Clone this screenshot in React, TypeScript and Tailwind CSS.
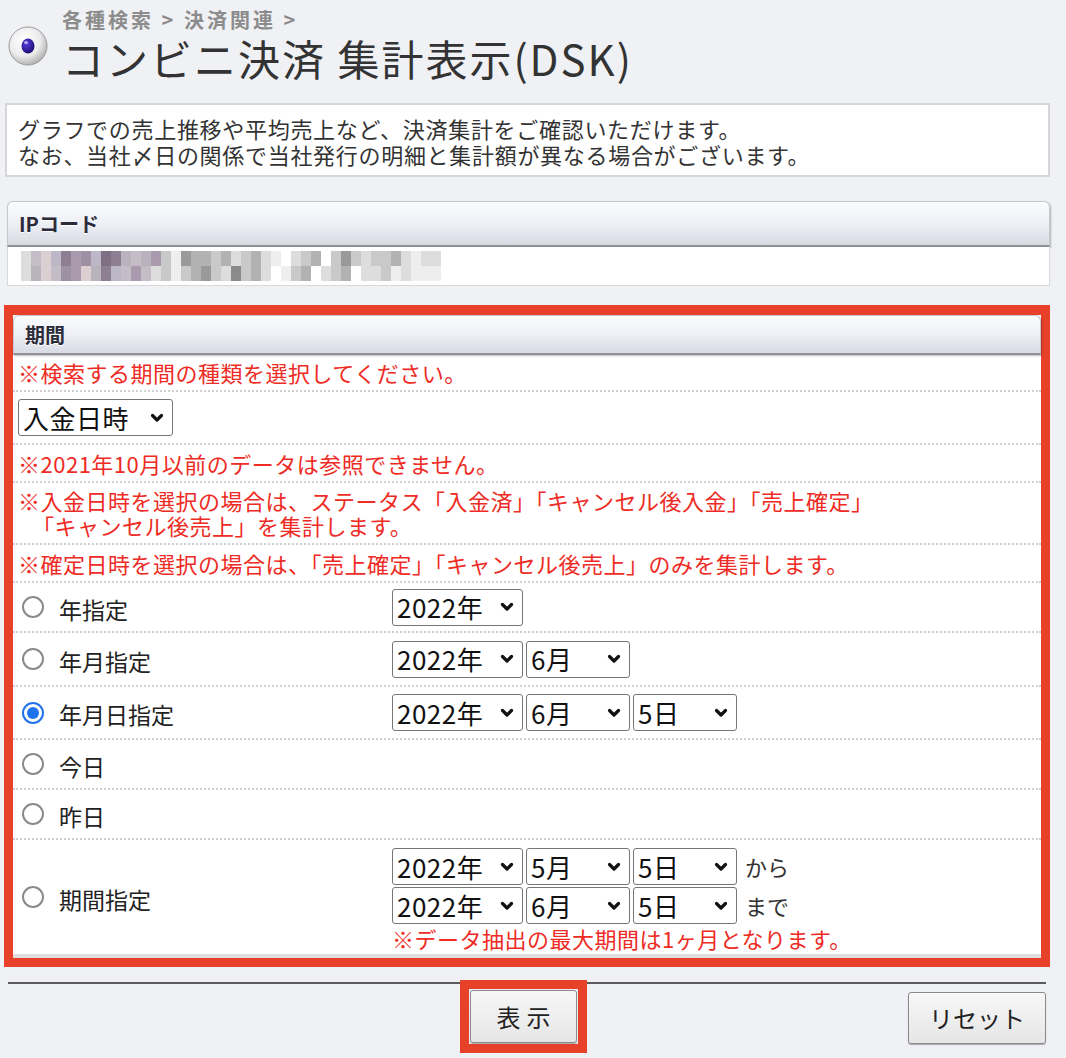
import React from "react";

const JP = "font-['Noto_Sans_CJK_JP','Noto_Sans',sans-serif]";

function Chevron() {
  return (
    <svg width="14" height="10" viewBox="0 0 14 10" className="shrink-0">
      <path d="M2.5 2.5 L7 7 L11.5 2.5" fill="none" stroke="#111" strokeWidth="3.2" strokeLinecap="round" strokeLinejoin="round" />
    </svg>
  );
}

function Select({ value, w }: { value: string; w: string }) {
  return (
    <div className={`${w} h-[37px] flex items-center justify-between pl-[4px] pr-[8px] bg-white border border-[#767676] rounded-[3px] text-[26px] leading-none text-[#111] tracking-[0.5px]`}>
      <span>{value}</span>
      <Chevron />
    </div>
  );
}

function Radio({ checked }: { checked?: boolean }) {
  if (checked) {
    return (
      <span className="w-[22px] h-[22px] shrink-0 rounded-full border-2 border-[#1f73ec] bg-white flex items-center justify-center">
        <span className="w-[12px] h-[12px] rounded-full bg-[#1f73ec]" />
      </span>
    );
  }
  return <span className="w-[22px] h-[22px] shrink-0 rounded-full border-2 border-[#8a8a8a] bg-white" />;
}

function BarHeader({ label, h }: { label: string; h: string }) {
  return (
    <div className={`${h} flex items-center px-[11px] bg-linear-to-b from-[#fbfcff] via-[#eef0f6] to-[#d8dbe3] border border-[#c6c8ce] border-b-2 border-b-[#8f9198] rounded-t-[6px] shadow-[1px_1px_2px_rgba(0,0,0,0.25)]`}>
      <span className="text-[20px] leading-none font-bold text-[#2b2b3a] [text-shadow:0_1px_0_#fff]">{label}</span>
    </div>
  );
}

function Note({ children, h }: { children: React.ReactNode; h: string }) {
  return (
    <div className={`${h} flex flex-col justify-center pl-[5px] border-b-2 border-dotted border-[#d0d0d0] text-[22px] leading-[25px] tracking-[0.5px] text-[#ee2b24]`}>
      {children}
    </div>
  );
}

function RadioRow({ label, checked, h, children }: { label: string; checked?: boolean; h: string; children?: React.ReactNode }) {
  return (
    <div className={`${h} flex items-center border-b-2 border-dotted border-[#d0d0d0]`}>
      <div className="w-[379px] flex items-center pl-[9px] gap-[15px]">
        <Radio checked={checked} />
        <span className="text-[23px] leading-none text-[#222] mt-[4px]">{label}</span>
      </div>
      <div className="flex gap-[3px]">{children}</div>
    </div>
  );
}

const palette: Record<string, string> = {
  a: "#9d91a3", b: "#dccfd2", c: "#bdb8c8", d: "#8d7f91", e: "#a99aae", f: "#c4bcc7",
  g: "#7e6f83", h: "#b9b3bd", i: "#9a9a9a", j: "#b2b2b2", k: "#c9c9c9", l: "#dddddd",
  m: "#eeeeee", n: "#ffffff", o: "#8a8a8a",
};
const mosaic = [
  "lfbcdeacgdhfhekm" + "ijjkjlkjl" + "mnlkjnkiklkkjlmll",
  "lhbfaebhdcfeflkm" + "kjiklokjl" + "nmkjnlkjnllkmlmmm",
];

export default function App() {
  return (
    <div className={`min-h-[1058px] w-[1066px] bg-[#f0f1f5] ${JP} text-[#222]`}>
      <div className="w-[1045px] ml-[5px] pt-[8px]">
        {/* header */}
        <div className="flex">
          <svg width="40" height="40" viewBox="0 0 40 40" className="mt-[18px] ml-[3px] shrink-0">
            <defs>
              <radialGradient id="sph" cx="0.4" cy="0.35" r="0.7">
                <stop offset="0" stopColor="#ffffff" />
                <stop offset="0.6" stopColor="#ececec" />
                <stop offset="1" stopColor="#a9a9a9" />
              </radialGradient>
              <radialGradient id="dot" cx="0.4" cy="0.35" r="0.7">
                <stop offset="0" stopColor="#5a3ee0" />
                <stop offset="1" stopColor="#1a0a6a" />
              </radialGradient>
            </defs>
            <circle cx="20" cy="20" r="19" fill="url(#sph)" stroke="#9a9a9a" strokeWidth="1" />
            <ellipse cx="20" cy="20" rx="6.5" ry="7.5" fill="url(#dot)" />
            <ellipse cx="18" cy="16.5" rx="2" ry="1.5" fill="#ffffff" opacity="0.6" />
          </svg>
          <div className="ml-[14px]">
            <div className="text-[20px] leading-[24px] font-bold text-[#8c8c8c] tracking-[3px]">各種検索 &gt; 決済関連 &gt;</div>
            <div className="text-[42px] leading-[52px] text-[#333] tracking-[2px]">コンビニ決済 集計表示(DSK)</div>
          </div>
        </div>

        {/* description */}
        <div className="mt-[19px] bg-white border-2 border-[#d6d6d6] pt-[10px] pb-[8px] px-[11px] text-[22px] leading-[26px] tracking-[0.7px] text-[#333]">
          <div>グラフでの売上推移や平均売上など、決済集計をご確認いただけます。</div>
          <div>なお、当社〆日の関係で当社発行の明細と集計額が異なる場合がございます。</div>
        </div>

        {/* IP code */}
        <div className="mt-[24px] ml-[2px]">
          <BarHeader label="IPコード" h="h-[46px]" />
          <div className="h-[39px] bg-white border border-t-0 border-[#d8d8d8] flex items-center pl-[13px]">
            <div className="flex flex-col blur-[0.6px]">
              {mosaic.map((row, r) => (
                <div key={r} className="flex">
                  {row.split("").map((c, i) => (
                    <span key={i} className="w-[10px] h-[15px]" style={{ backgroundColor: palette[c] }} />
                  ))}
                </div>
              ))}
            </div>
          </div>
        </div>

        {/* period */}
        <div className="mt-[19px] -ml-[1px] border-[9px] border-t-[10px] border-[#e8412a] bg-white">
          <BarHeader label="期間" h="h-[40px]" />
          <Note h="h-[37px]">※検索する期間の種類を選択してください。</Note>
          <div className="h-[53px] flex items-center pl-[5px] border-b-2 border-dotted border-[#d0d0d0]">
            <Select value="入金日時" w="w-[155px]" />
          </div>
          <Note h="h-[38px]">※2021年10月以前のデータは参照できません。</Note>
          <Note h="h-[62px]">
            <div>※入金日時を選択の場合は、ステータス「入金済」「キャンセル後入金」「売上確定」</div>
            <div className="pl-[14px]">「キャンセル後売上」を集計します。</div>
          </Note>
          <Note h="h-[38px]">※確定日時を選択の場合は、「売上確定」「キャンセル後売上」のみを集計します。</Note>

          <RadioRow label="年指定" h="h-[50px]">
            <Select value="2022年" w="w-[131px]" />
          </RadioRow>
          <RadioRow label="年月指定" h="h-[54px]">
            <Select value="2022年" w="w-[131px]" />
            <Select value="6月" w="w-[104px]" />
          </RadioRow>
          <RadioRow label="年月日指定" checked h="h-[53px]">
            <Select value="2022年" w="w-[131px]" />
            <Select value="6月" w="w-[104px]" />
            <Select value="5日" w="w-[104px]" />
          </RadioRow>
          <RadioRow label="今日" h="h-[50px]" />
          <RadioRow label="昨日" h="h-[50px]" />

          <div className="h-[118px] flex items-center border-b-[4px] border-[#dedede]">
            <div className="w-[379px] flex items-center pl-[9px] gap-[15px]">
              <Radio />
              <span className="text-[23px] leading-none text-[#222] mt-[4px]">期間指定</span>
            </div>
            <div className="flex flex-col gap-[2px] pt-[4px]">
              <div className="flex items-center gap-[3px]">
                <Select value="2022年" w="w-[131px]" />
                <Select value="5月" w="w-[104px]" />
                <Select value="5日" w="w-[104px]" />
                <span className="ml-[5px] text-[22px] text-[#333]">から</span>
              </div>
              <div className="flex items-center gap-[3px]">
                <Select value="2022年" w="w-[131px]" />
                <Select value="6月" w="w-[104px]" />
                <Select value="5日" w="w-[104px]" />
                <span className="ml-[5px] text-[22px] text-[#333]">まで</span>
              </div>
              <div className="text-[22px] leading-[24px] tracking-[0.5px] text-[#ee2b24]">※データ抽出の最大期間は1ヶ月となります。</div>
            </div>
          </div>
        </div>

        {/* bottom */}
        <div className="mt-[15px] ml-[3px] w-[1038px] border-t-2 border-[#5c5c5c]">
          <div className="flex items-start">
            <div className="ml-[452px] -mt-[4px] border-[9px] border-[#e8412a] p-[1px]">
              <button className="w-[107px] h-[53px] bg-linear-to-b from-[#f7f7f7] to-[#e6e6e6] border border-[#8a8a8a] rounded-[3px] shadow-[0_1px_1px_rgba(0,0,0,0.3)] text-[24px] text-[#222] tracking-[6px] pl-[6px]">
                表示
              </button>
            </div>
            <button className="ml-auto mt-[8px] w-[138px] h-[52px] bg-linear-to-b from-[#f7f7f7] to-[#e6e6e6] border border-[#8a8a8a] rounded-[3px] shadow-[0_1px_1px_rgba(0,0,0,0.3)] text-[24px] text-[#222]">
              リセット
            </button>
          </div>
        </div>
      </div>
    </div>
  );
}
